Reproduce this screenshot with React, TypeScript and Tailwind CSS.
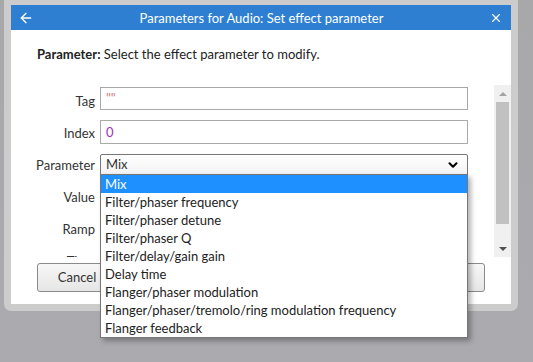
import React from 'react';
import { ArrowLeft, X, ChevronDown } from 'lucide-react';

const options = [
  'Mix',
  'Filter/phaser frequency',
  'Filter/phaser detune',
  'Filter/phaser Q',
  'Filter/delay/gain gain',
  'Delay time',
  'Flanger/phaser modulation',
  'Flanger/phaser/tremolo/ring modulation frequency',
  'Flanger feedback',
];

const Row = ({ label, children }: { label: string; children?: React.ReactNode }) => (
  <div className="flex h-[32px] shrink-0">
    <div className="w-[84px] pt-[5px] text-right leading-[18px] text-[#333]">{label}</div>
    <div className="ml-[5px] w-[368px]">{children}</div>
  </div>
);

const App: React.FC = () => {
  return (
    <div className="w-[533px] h-[362px] overflow-hidden bg-gradient-to-b from-[#a8a8aa] to-[#abaaaf] font-['Lato','Open_Sans',sans-serif] text-[13px]">
      <div className="ml-[4px] w-[514px] h-[311px] bg-[#cccccc] rounded-b-[7px] pt-[5px] px-[7px]">
        <div className="relative h-[299px] bg-white flex flex-col">
          {/* title bar */}
          <div className="h-[25px] shrink-0 bg-[#2e7fd1] flex items-center text-white">
            <ArrowLeft size={16} strokeWidth={2} className="ml-[7px]" />
            <div className="flex-1 text-center text-[13px] leading-[18px]">Parameters for Audio: Set effect parameter</div>
            <X size={14} strokeWidth={2} className="mr-[8px]" />
          </div>

          <div className="mt-[15px] pl-[26px] leading-[18px] text-[#222]">
            <span className="font-bold">Parameter:</span> Select the effect parameter to modify.
          </div>

          {/* scrolling form */}
          <div className="mt-[22px] h-[172px] flex overflow-hidden">
            <div className="flex-1 pt-[2px] flex flex-col">
              <Row label="Tag">
                <div className="h-[23px] border border-[#a9a9a9] pl-[5px] leading-[21px] text-[#d07a7a]">""</div>
              </Row>
              <Row label="Index">
                <div className="mt-[1px] h-[24px] border border-[#a9a9a9] pl-[5px] leading-[22px] text-[#a030b8]">0</div>
              </Row>
              <Row label="Parameter">
                <div className="mt-[3px] h-[21px] border border-[#767676] rounded-t-[2px] bg-gradient-to-b from-white to-[#f3f3f3] pl-[5px] pr-[7px] flex items-center text-[#333]">
                  <span className="flex-1">Mix</span>
                  <ChevronDown size={14} strokeWidth={3.5} className="text-black" />
                </div>
              </Row>
              <Row label="Value" />
              <Row label="Ramp" />
              <Row label="Time" />
            </div>
            {/* scrollbar */}
            <div className="w-[17px] bg-[#f0f0f0] flex flex-col items-center">
              <div className="h-[17px] flex items-center justify-center">
                <div className="w-0 h-0 border-l-[4px] border-r-[4px] border-b-[4px] border-l-transparent border-r-transparent border-b-[#a3a3a3]" />
              </div>
              <div className="w-[13px] h-[122px] bg-[#c1c1c1]" />
              <div className="flex-1" />
              <div className="h-[17px] flex items-center justify-center">
                <div className="w-0 h-0 border-l-[4px] border-r-[4px] border-t-[4px] border-l-transparent border-r-transparent border-t-[#505050]" />
              </div>
            </div>
          </div>

          {/* buttons */}
          <div className="mt-[6px] px-[26px] flex">
            <button className="w-[80px] h-[29px] rounded-[3px] border border-[#8a8a8a] bg-gradient-to-b from-[#f7f7f7] to-[#e6e6e6] text-[#333]">Cancel</button>
            <button className="ml-auto w-[80px] h-[29px] rounded-[3px] border border-[#8a8a8a] bg-gradient-to-b from-[#f7f7f7] to-[#e6e6e6] text-[#333]">OK</button>
          </div>

          {/* open select list */}
          <div className="absolute left-[89px] top-[169px] w-[368px] border border-[#767676] bg-white shadow-[3px_3px_5px_rgba(0,0,0,0.3)]">
            {options.map((o, i) => (
              <div
                key={o}
                className={`h-[18px] pl-[4px] leading-[18px] whitespace-nowrap ${i === 0 ? 'bg-[#1e90ff] text-white' : 'text-[#222]'}`}
              >
                {o}
              </div>
            ))}
          </div>
        </div>
      </div>
    </div>
  );
};

export default App;
